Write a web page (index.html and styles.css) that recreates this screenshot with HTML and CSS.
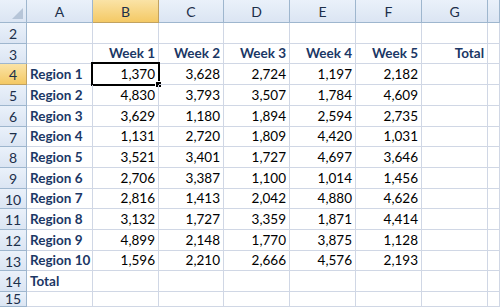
FILE: index.html
```html
<!DOCTYPE html>
<html lang="en">
  <head>
    <meta charset="UTF-8" />
    <meta name="viewport" content="width=device-width, initial-scale=1.0" />
    <title>Weekly Sales by Region</title>
    <link rel="stylesheet" href="styles.css">
  </head>
  <body>
    <div class="sheet" id="sheet">
      <!-- column headers -->
      <div class="hd corner"><span class="tri"></span></div>
      <div class="hd col">A</div>
      <div class="hd col sel">B</div>
      <div class="hd col">C</div>
      <div class="hd col">D</div>
      <div class="hd col">E</div>
      <div class="hd col">F</div>
      <div class="hd col">G</div>
      <div class="hd col"></div>
    </div>

    <script>
      var rows = [
        ["Region 1", 1370, 3628, 2724, 1197, 2182],
        ["Region 2", 4830, 3793, 3507, 1784, 4609],
        ["Region 3", 3629, 1180, 1894, 2594, 2735],
        ["Region 4", 1131, 2720, 1809, 4420, 1031],
        ["Region 5", 3521, 3401, 1727, 4697, 3646],
        ["Region 6", 2706, 3387, 1100, 1014, 1456],
        ["Region 7", 2816, 1413, 2042, 4880, 4626],
        ["Region 8", 3132, 1727, 3359, 1871, 4414],
        ["Region 9", 4899, 2148, 1770, 3875, 1128],
        ["Region 10", 1596, 2210, 2666, 4576, 2193]
      ];

      var sheet = document.getElementById("sheet");

      // add one cell to the grid
      function cell(text, cls) {
        var d = document.createElement("div");
        d.className = "c " + (cls || "");
        d.textContent = text;
        sheet.appendChild(d);
        return d;
      }

      function rowHead(n, cls) {
        var d = document.createElement("div");
        d.className = "hd row " + (cls || "");
        d.textContent = n;
        sheet.appendChild(d);
      }

      function fmt(n) {
        return n.toLocaleString("en-US");
      }

      // row 2 (empty)
      rowHead(2);
      for (var i = 0; i < 8; i++) cell("");

      // row 3: week titles
      rowHead(3);
      cell("");
      for (var w = 1; w <= 5; w++) cell("Week " + w, "num lbl");
      cell("Total", "num lbl");
      cell("");

      // rows 4 - 13: data
      rows.forEach(function (r, idx) {
        rowHead(idx + 4, idx === 0 ? "sel" : "");
        cell(r[0], "lbl");
        for (var k = 1; k <= 5; k++) {
          var c = cell(fmt(r[k]), "num");
          if (idx === 0 && k === 1) {
            var box = document.createElement("span");
            box.className = "active";
            var handle = document.createElement("span");
            handle.className = "handle";
            box.appendChild(handle);
            c.appendChild(box);
          }
        }
        cell("");
        cell("");
      });

      // row 14: total, row 15 empty
      rowHead(14);
      cell("Total", "lbl");
      for (var t = 0; t < 7; t++) cell("");
      rowHead(15, "last");
      for (var e = 0; e < 8; e++) cell("");
    </script>
  </body>
</html>
```

FILE: styles.css
```css
body {
  margin: 0;
  background-color: #ffffff;
  overflow: hidden;
  font-family: Lato, "Open Sans", sans-serif;
}

.sheet {
  display: grid;
  grid-template-columns: 27px 66px 66px 65px 66px 66px 66px 66px 1fr;
  grid-template-rows: 23px 21px 20px 21px 21px 21px 20px 21px 21px 20px 21px 21px 20px 21px 15px;
  width: 500px;
  height: 307px;
  overflow: hidden;
}

.c {
  position: relative;
  border-right: 1px solid #d0d7e5;
  border-bottom: 1px solid #d0d7e5;
  font-size: 13.5px;
  color: #000000;
  display: flex;
  align-items: flex-end;
  padding: 0 3px 2px 3px;
  white-space: nowrap;
  box-sizing: border-box;
}

.num {
  justify-content: flex-end;
}

.lbl {
  font-weight: bold;
  color: #1b3765;
}

/* headers */

.hd {
  box-sizing: border-box;
  border-right: 1px solid #9eb6ce;
  border-bottom: 1px solid #9eb6ce;
  background: linear-gradient(#eaf1fa, #dbe5f3);
  color: #1c2f4a;
  font-size: 14px;
  display: flex;
  align-items: center;
  justify-content: center;
}

.hd.col {
  padding-top: 1px;
}

.hd.row {
  padding-top: 1px;
}

.hd.last {
  align-items: flex-end;
  padding-bottom: 0;
  line-height: 14px;
}

.hd.sel {
  background: linear-gradient(#fae3a6, #f4c965);
  border-right-color: #c2a260;
  border-bottom-color: #c2a260;
}

.corner {
  position: relative;
}

.tri {
  position: absolute;
  right: 3px;
  bottom: 3px;
  width: 0;
  height: 0;
  border-left: 11px solid transparent;
  border-bottom: 11px solid #b6c5d8;
}

/* active cell */

.active {
  position: absolute;
  top: -2px;
  left: -2px;
  right: -2px;
  bottom: -2px;
  border: 2px solid #000000;
}

.handle {
  position: absolute;
  right: -4px;
  bottom: -4px;
  width: 5px;
  height: 5px;
  background-color: #000000;
  border: 1px solid #ffffff;
}
```
